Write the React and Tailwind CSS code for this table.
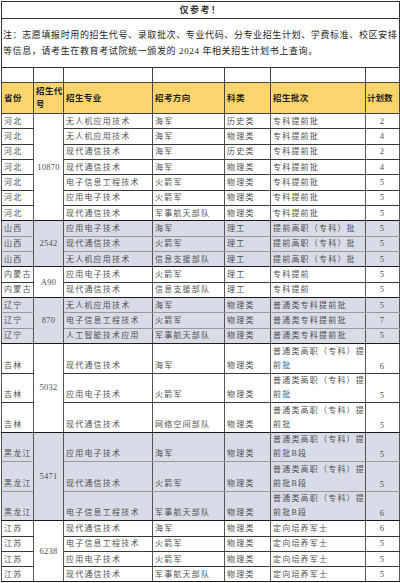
import React from 'react';

const groups = [
  {
    prov: '河北', code: '10870', shade: false, kind: 'a',
    rows: [
      ['无人机应用技术', '海军', '历史类', '专科提前批', '2'],
      ['无人机应用技术', '海军', '物理类', '专科提前批', '4'],
      ['现代通信技术', '海军', '历史类', '专科提前批', '2'],
      ['现代通信技术', '海军', '物理类', '专科提前批', '4'],
      ['电子信息工程技术', '火箭军', '物理类', '专科提前批', '5'],
      ['应用电子技术', '火箭军', '物理类', '专科提前批', '5'],
      ['现代通信技术', '军事航天部队', '物理类', '专科提前批', '5'],
    ],
  },
  {
    prov: '山西', code: '2542', shade: true, kind: 'a',
    rows: [
      ['应用电子技术', '海军', '理工', '提前高职（专科）批', '5'],
      ['现代通信技术', '火箭军', '理工', '提前高职（专科）批', '5'],
      ['无人机应用技术', '信息支援部队', '理工', '提前高职（专科）批', '5'],
    ],
  },
  {
    prov: '内蒙古', code: 'A90', shade: false, kind: 'a',
    rows: [
      ['应用电子技术', '火箭军', '理工', '专科提前', '5'],
      ['现代通信技术', '信息支援部队', '理工', '专科提前', '5'],
    ],
  },
  {
    prov: '辽宁', code: '870', shade: true, kind: 'a',
    rows: [
      ['无人机应用技术', '海军', '物理类', '普通类专科提前批', '5'],
      ['电子信息工程技术', '火箭军', '物理类', '普通类专科提前批', '7'],
      ['人工智能技术应用', '军事航天部队', '物理类', '普通类专科提前批', '5'],
    ],
  },
  {
    prov: '吉林', code: '5032', shade: false, kind: 'tall',
    rows: [
      ['现代通信技术', '海军', '物理类', ['普通类高职（专科）提', '前批'], '6'],
      ['应用电子技术', '火箭军', '物理类', ['普通类高职（专科）提', '前批'], '5'],
      ['现代通信技术', '网络空间部队', '物理类', ['普通类高职（专科）提', '前批'], '5'],
    ],
  },
  {
    prov: '黑龙江', code: '5471', shade: true, kind: 'tall',
    rows: [
      ['应用电子技术', '海军', '物理类', ['普通类高职（专科）提', '前批B段'], '5'],
      ['现代通信技术', '火箭军', '物理类', ['普通类高职（专科）提', '前批B段'], '5'],
      ['电子信息工程技术', '军事航天部队', '物理类', ['普通类高职（专科）提', '前批B段'], '6'],
    ],
  },
  {
    prov: '江苏', code: '6238', shade: false, kind: 'b',
    rows: [
      ['现代通信技术', '海军', '物理类', '定向培养军士', '6'],
      ['电子信息工程技术', '火箭军', '物理类', '定向培养军士', '5'],
      ['应用电子技术', '火箭军', '物理类', '定向培养军士', '5'],
      ['现代通信技术', '军事航天部队', '物理类', '定向培养军士', '5'],
    ],
  },
];

function DataRows({ g }) {
  const tall = g.kind === 'tall';
  const rowH = tall ? 'h-[29.6px]' : g.kind === 'b' ? 'h-[15.25px]' : 'h-[15.33px]';
  const bg = g.shade ? 'bg-[#d9dce6]' : 'bg-white';
  const inner = g.shade ? 'border-b-[#9a9a9a]' : 'border-b-[#3a3a3a]';
  const valign = tall ? 'align-bottom' : 'align-middle';
  const lead = tall ? 'leading-[14px]' : 'leading-[13px]';
  return g.rows.map((r, i) => {
    const last = i === g.rows.length - 1;
    const bb = last ? 'border-b-[#1a1a1a]' : inner;
    const cell = `border border-x-[#555] border-t-[#555] ${bb} ${valign} ${lead} p-0 pl-[2px] text-left whitespace-nowrap overflow-hidden`;
    return (
      <tr key={i} className={`${rowH} ${bg}`}>
        <td className={cell}>{g.prov}</td>
        {i === 0 && (
          <td
            rowSpan={g.rows.length}
            className={`border border-x-[#555] border-t-[#555] border-b-[#1a1a1a] align-middle p-0 text-center text-[8.5px] tracking-[0.3px]`}
          >
            {g.code}
          </td>
        )}
        <td className={cell}>{r[0]}</td>
        <td className={cell}>{r[1]}</td>
        <td className={cell}>{r[2]}</td>
        <td className={cell}>
          {Array.isArray(r[3]) ? (
            <>
              {r[3][0]}
              <br />
              {r[3][1]}
            </>
          ) : (
            r[3]
          )}
        </td>
        <td className={`${cell} !text-center !pl-0 text-[8.5px]`}>{r[4]}</td>
      </tr>
    );
  });
}

export default function App() {
  const hcell = 'border border-[#444] bg-[#fbd56b] p-0 pl-[2px] align-middle text-left font-bold text-[#1e1e1e] text-[8.5px] tracking-[0.4px] leading-[13px]';
  return (
    <div className="w-[400px] h-[583px] overflow-hidden bg-white pt-[1px] pl-[1px]">
      <table className="table-fixed border-collapse w-[398px] font-['Liberation_Serif','Noto_Sans_CJK_SC',serif] text-[8px] tracking-[1.2px] text-[#505050]">
        <colgroup>
          <col className="w-[32px]" />
          <col className="w-[30px]" />
          <col className="w-[89px]" />
          <col className="w-[72px]" />
          <col className="w-[46px]" />
          <col className="w-[95px]" />
          <col className="w-[34px]" />
        </colgroup>
        <tbody>
          <tr className="h-[17px]">
            <td colSpan={7} className="border border-[#333] p-0 text-center align-middle text-[9px] font-bold text-[#333] tracking-[1.5px] leading-[13px]">
              仅参考！
            </td>
          </tr>
          <tr className="h-[49px]">
            <td colSpan={7} className="border border-[#333] p-0 pl-[1px] align-middle text-[9px] text-[#1e1e1e] tracking-[0.62px] leading-[16px] whitespace-nowrap">
              注：志愿填报时用的招生代号、录取批次、专业代码、分专业招生计划、学费标准、校区安排
              <br />
              等信息，请考生在教育考试院统一颁发的 2024 年相关招生计划书上查询。
            </td>
          </tr>
          <tr className="h-[15px]">
            {[0, 1, 2, 3, 4, 5, 6].map((k) => (
              <td key={k} className="border border-[#444] p-0" />
            ))}
          </tr>
          <tr className="h-[31px]">
            <td className={hcell}>省份</td>
            <td className={hcell}>
              招生代
              <br />号
            </td>
            <td className={hcell}>招生专业</td>
            <td className={hcell}>招考方向</td>
            <td className={hcell}>科类</td>
            <td className={hcell}>招生批次</td>
            <td className={`${hcell} !pl-[1px] tracking-[0px]`}>计划数</td>
          </tr>
          {groups.map((g) => (
            <DataRows key={g.prov} g={g} />
          ))}
        </tbody>
      </table>
    </div>
  );
}
